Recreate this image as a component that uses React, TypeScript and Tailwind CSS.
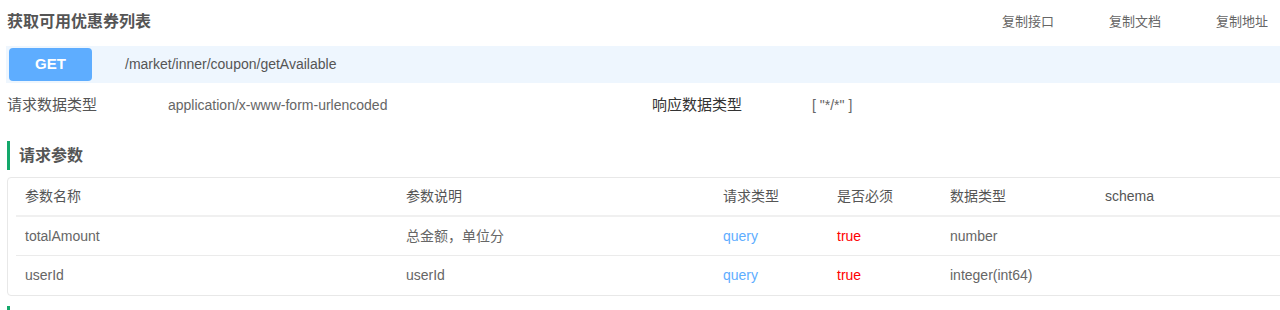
const FONT = { fontFamily: '"Liberation Sans", "Noto Sans CJK SC", sans-serif' };

type Param = {
  name: string;
  desc: string;
  in: string;
  required: boolean;
  type: string;
  schema: string;
};

const params: Param[] = [
  { name: "totalAmount", desc: "总金额，单位分", in: "query", required: true, type: "number", schema: "" },
  { name: "userId", desc: "userId", in: "query", required: true, type: "integer(int64)", schema: "" },
];

function Row({ cells, head, last }: { cells: React.ReactNode[]; head?: boolean; last?: boolean }) {
  const widths = ["w-[381px]", "w-[317px]", "w-[114px]", "w-[113px]", "w-[155px]", "flex-1"];
  return (
    <div
      className={
        "flex h-[39px] items-center text-[14px] " +
        (last ? "" : head ? "border-b-2 border-[#f0f0f0]" : "border-b border-[#ebebeb]")
      }
    >
      {cells.map((c, i) => (
        <div key={i} className={widths[i] + " pl-[9px] " + (head ? "text-[#555]" : "text-[#666]")}>
          {c}
        </div>
      ))}
    </div>
  );
}

export default function App() {
  return (
    <div className="h-[310px] w-[1280px] overflow-hidden bg-white" style={FONT}>
      {/* title + copy actions */}
      <div className="flex h-[46px] items-center justify-between pl-[7px] pr-[12px] pb-[2px]">
        <h1 className="text-[16px] font-bold text-[#555]">获取可用优惠券列表</h1>
        <div className="flex gap-[55px] text-[13px] text-[#666]">
          <span>复制接口</span>
          <span>复制文档</span>
          <span>复制地址</span>
        </div>
      </div>

      {/* method + path */}
      <div className="ml-[6px] flex h-[37px] items-center bg-[#eef6fe] pl-[3px]">
        <div className="flex h-[33px] w-[83px] items-center justify-center rounded-[4px] bg-[#5eadff] text-[15px] font-bold text-white">
          GET
        </div>
        <span className="ml-[33px] text-[14px] text-[#555]">/market/inner/coupon/getAvailable</span>
      </div>

      {/* content types */}
      <div className="flex h-[45px] items-center pl-[7px] text-[14px]">
        <span className="w-[161px] text-[15px] text-[#555]">请求数据类型</span>
        <span className="w-[484px] text-[#666]">application/x-www-form-urlencoded</span>
        <span className="w-[160px] text-[15px] text-[#333]">响应数据类型</span>
        <span className="text-[#666]">[ "*/*" ]</span>
      </div>

      {/* section: params */}
      <div className="mt-[13px] ml-[7px] flex h-[29px] items-center border-l-[3px] border-[#13a86b] pl-[9px]">
        <h2 className="text-[16px] font-bold text-[#555]">请求参数</h2>
      </div>

      <div className="mt-[7px] ml-[7px] -mr-[12px] rounded-[4px] border border-[#e8e8e8] px-[8px]">
        <Row head cells={["参数名称", "参数说明", "请求类型", "是否必须", "数据类型", "schema"]} />
        {params.map((p, i) => (
          <Row
            key={p.name}
            last={i === params.length - 1}
            cells={[
              p.name,
              p.desc,
              <span className="text-[#5eadff]">{p.in}</span>,
              <span className="text-[#ff0000]">{p.required ? "true" : "false"}</span>,
              p.type,
              p.schema,
            ]}
          />
        ))}
      </div>

      {/* next section start */}
      <div className="mt-[10px] ml-[7px] h-[29px] border-l-[3px] border-[#13a86b]" />
    </div>
  );
}
